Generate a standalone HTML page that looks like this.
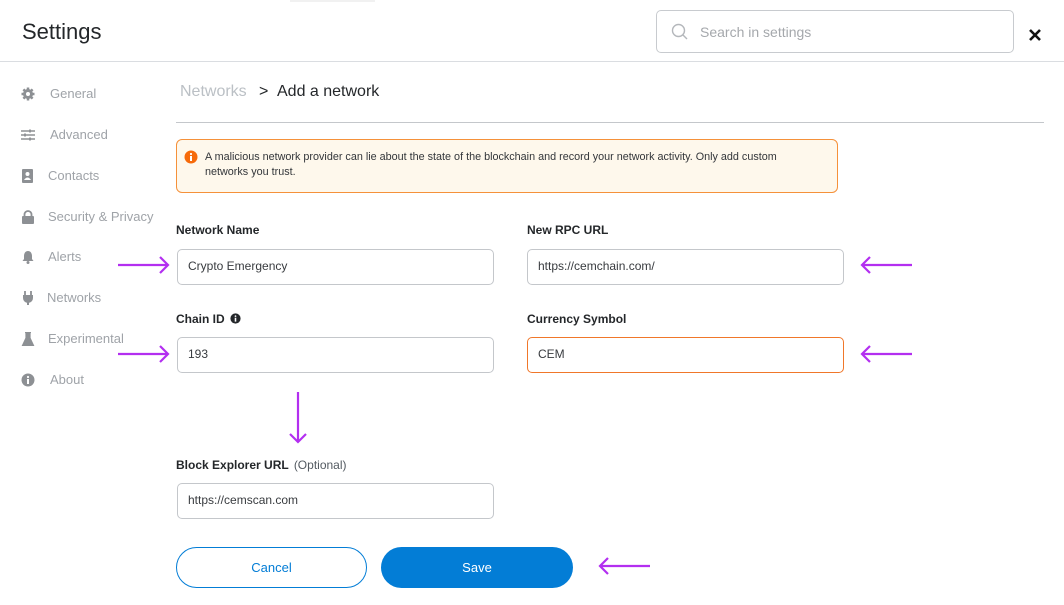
<!DOCTYPE html>
<html><head><meta charset="utf-8"><style>
*{box-sizing:border-box;margin:0;padding:0}
body{width:1064px;height:604px;background:#fff;font-family:"Liberation Sans",sans-serif;position:relative;overflow:hidden;color:#24272a}
.a{position:absolute}
.hdr{left:0;top:61px;width:1064px;height:1px;background:#dadde1}
.side{font-size:13px;color:#9fa3a8}
.side div{position:absolute;left:0;height:20px;line-height:20px}
.side svg{position:absolute;left:21px;top:3px}
.side span{position:absolute;left:50px;white-space:nowrap}
.lbl{font-size:12px;font-weight:bold;color:#24272a}
.inp{height:36px;border:1.5px solid #c4c7cb;border-radius:5px;font-size:12px;line-height:33px;padding-left:10px;color:#383b3f;width:317px}
</style></head><body>
<div class="a" style="left:22px;top:19px;font-size:22px;color:#24272a">Settings</div>
<div class="a" style="left:290px;top:0;width:85px;height:2px;background:#f1f1f1"></div>
<div class="a" style="left:656px;top:10px;width:358px;height:43px;border:1px solid #c8cbcf;border-radius:5px"></div>
<svg class="a" style="left:671px;top:23px" width="18" height="18" viewBox="0 0 18 18"><circle cx="7.5" cy="7.5" r="6" fill="none" stroke="#b4b7bb" stroke-width="1.4"/><path d="M12 12 L16 16" stroke="#b4b7bb" stroke-width="1.4"/></svg>
<div class="a" style="left:700px;top:24px;font-size:14px;color:#a5a8ac">Search in settings</div>
<svg class="a" style="left:1028px;top:28px" width="14" height="14" viewBox="0 0 14 14"><path d="M2 2L12 12M12 2L2 12" stroke="#111" stroke-width="2.6"/></svg>
<div class="a hdr"></div>

<div class="a side" style="left:0;top:1px;width:170px;height:604px">
<div style="top:83px"><svg width="14" height="14" viewBox="0 0 14 14"><circle cx="7" cy="7" r="5" fill="#8d9094"/><g stroke="#8d9094" stroke-width="2.5"><path d="M7 0.5V13.5M0.5 7H13.5M2.4 2.4L11.6 11.6M11.6 2.4L2.4 11.6"/></g><circle cx="7" cy="7" r="2" fill="#fff"/></svg><span>General</span></div>
<div style="top:124px"><svg width="14" height="14" viewBox="0 0 14 14"><g stroke="#8d9094" stroke-width="1.5"><path d="M0 3H14M0 7H14M0 11H14"/><path d="M9 1.5V4.5M4 5.5V8.5M9 9.5V12.5" stroke-width="1.8"/></g></svg><span>Advanced</span></div>
<div style="top:165px"><svg width="14" height="14" viewBox="0 0 14 14"><rect x="1" y="0" width="11" height="14" rx="1" fill="#8d9094"/><circle cx="6.5" cy="5" r="2" fill="#fff"/><path d="M3 11Q6.5 6 10 11Z" fill="#fff"/></svg><span style="left:48px">Contacts</span></div>
<div style="top:206px"><svg width="14" height="14" viewBox="0 0 14 14"><path d="M3.5 6V4.5A3.5 3.5 0 0 1 10.5 4.5V6" fill="none" stroke="#8d9094" stroke-width="1.8"/><rect x="1" y="6" width="12" height="8" rx="1" fill="#8d9094"/></svg><span style="left:48px">Security &amp; Privacy</span></div>
<div style="top:246px"><svg width="14" height="14" viewBox="0 0 14 14"><path d="M7 1C4 1 3 4 3 6V9L1.5 11H12.5L11 9V6C11 4 10 1 7 1Z" fill="#8d9094"/><circle cx="7" cy="12.5" r="1.5" fill="#8d9094"/></svg><span style="left:48px">Alerts</span></div>
<div style="top:287px"><svg width="14" height="14" viewBox="0 0 14 14"><path d="M4 0V4M10 0V4" stroke="#8d9094" stroke-width="1.8"/><path d="M2 4H12V7A5 5 0 0 1 2 7Z" fill="#8d9094"/><path d="M7 10V14" stroke="#8d9094" stroke-width="2"/></svg><span style="left:47px">Networks</span></div>
<div style="top:328px"><svg width="14" height="14" viewBox="0 0 14 14"><path d="M4 0.5H10M5 1V6L1.5 13.5H12.5L9 6V1" fill="#8d9094" stroke="#8d9094" stroke-width="1.2"/></svg><span style="left:48px">Experimental</span></div>
<div style="top:369px"><svg width="14" height="14" viewBox="0 0 14 14"><circle cx="7" cy="7" r="6.5" fill="#8d9094"/><rect x="6" y="6" width="2" height="5" fill="#fff"/><circle cx="7" cy="4" r="1.1" fill="#fff"/></svg><span>About</span></div>
</div>

<div class="a" style="left:180px;top:83px;font-size:16px;color:#bbc0c5">Networks</div>
<div class="a" style="left:259px;top:83px;font-size:16px;color:#24272a">&gt;</div>
<div class="a" style="left:277px;top:83px;font-size:16px;color:#24272a">Add a network</div>
<div class="a" style="left:176px;top:122px;width:868px;height:1px;background:#c4c7cb"></div>

<div class="a" style="left:176px;top:139px;width:662px;height:54px;background:#fef8ec;border:1px solid #f5913a;border-radius:6px"></div>
<svg class="a" style="left:184px;top:150px" width="14" height="14" viewBox="0 0 14 14"><circle cx="7" cy="7" r="6.5" fill="#f66a0a"/><rect x="6" y="6" width="2" height="5" fill="#fff"/><circle cx="7" cy="4" r="1.1" fill="#fff"/></svg>
<div class="a" style="left:205px;top:150px;font-size:10.8px;line-height:15px;color:#33363a;width:615px">A malicious network provider can lie about the state of the blockchain and record your network activity. Only add custom networks you trust.</div>

<div class="a lbl" style="left:176px;top:223px">Network Name</div>
<div class="a lbl" style="left:527px;top:223px">New RPC URL</div>
<div class="a inp" style="left:177px;top:249px">Crypto Emergency</div>
<div class="a inp" style="left:527px;top:249px">https://cemchain.com/</div>
<div class="a lbl" style="left:176px;top:312px">Chain ID <svg width="11" height="11" viewBox="0 0 14 14" style="vertical-align:-1px;margin-left:2px"><circle cx="7" cy="7" r="6.5" fill="#24272a"/><rect x="6" y="6" width="2" height="5" fill="#fff"/><circle cx="7" cy="4" r="1.1" fill="#fff"/></svg></div>
<div class="a lbl" style="left:527px;top:312px">Currency Symbol</div>
<div class="a inp" style="left:177px;top:337px">193</div>
<div class="a inp" style="left:527px;top:337px;border-color:#f0772a">CEM</div>

<div class="a lbl" style="left:176px;top:458px">Block Explorer URL <span style="font-weight:normal;color:#535a61;margin-left:2px">(Optional)</span></div>
<div class="a inp" style="left:177px;top:483px">https://cemscan.com</div>

<div class="a" style="left:176px;top:547px;width:191px;height:41px;border:1px solid #037dd6;border-radius:21px;text-align:center;line-height:39px;font-size:13px;color:#037dd6">Cancel</div>
<div class="a" style="left:381px;top:547px;width:192px;height:41px;background:#037dd6;border-radius:21px;text-align:center;line-height:41px;font-size:13px;color:#fff">Save</div>

<svg class="a" style="left:0;top:0" width="1064" height="604" viewBox="0 0 1064 604">
<g stroke="#b32ff0" stroke-width="2.2" fill="none">
<path d="M118 265H168M160 257L168 265L160 273"/>
<path d="M118 354H168M160 346L168 354L160 362"/>
<path d="M912 265H862M870 257L862 265L870 273"/>
<path d="M912 354H862M870 346L862 354L870 362"/>
<path d="M650 566H600M608 558L600 566L608 574"/>
<path d="M298 392V442M290 434L298 442L306 434"/>
</g></svg>
</body></html>
